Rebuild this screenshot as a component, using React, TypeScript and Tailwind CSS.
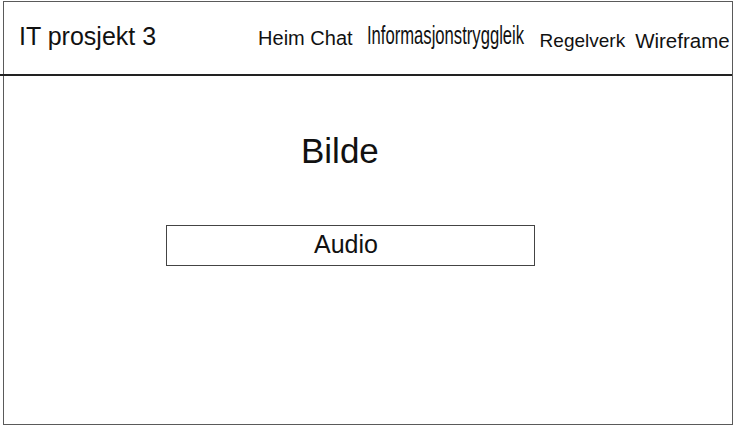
const FONT = "font-['Liberation_Sans',Arial,sans-serif]"

export default function App() {
  return (
    <div className={`w-[734px] h-[429px] bg-white overflow-hidden text-[#111] ${FONT}`}>
      <div className="ml-[3px] mt-[1px] w-[730px] h-[424px] border-[1.5px] border-[#5a5a5a] flex flex-col">
        {/* header */}
        <header className="-ml-[4px] w-[732px] h-[74px] border-b-2 border-[#222] flex items-center">
          <div className="pl-[19px] text-[25px] leading-none pb-[4px]">IT prosjekt 3</div>
          <nav className="ml-[102px] flex items-baseline pb-[4px]">
            <span className="text-[20px] leading-none">Heim Chat</span>
            <span className="ml-[14px] w-[157px] inline-block leading-none relative -top-[1px]">
              <span className="inline-block origin-left scale-x-[0.665] text-[25px] whitespace-nowrap">
                Informasjonstryggleik
              </span>
            </span>
            <span className="ml-[16px] text-[19px] leading-none relative top-[2px]">Regelverk</span>
            <span className="ml-[10px] text-[20.5px] leading-none relative top-[3px]">Wireframe</span>
          </nav>
        </header>

        {/* body */}
        <main className="flex-1 flex flex-col">
          <div className="mt-[57px] pl-[297px] text-[35px] leading-none">Bilde</div>
          <div className="mt-[57px] ml-[162px] w-[369px] h-[41px] border-[1.5px] border-[#444] flex items-center justify-center pr-[9px] pb-[2px] text-[25px] leading-none">
            Audio
          </div>
        </main>
      </div>
    </div>
  )
}
